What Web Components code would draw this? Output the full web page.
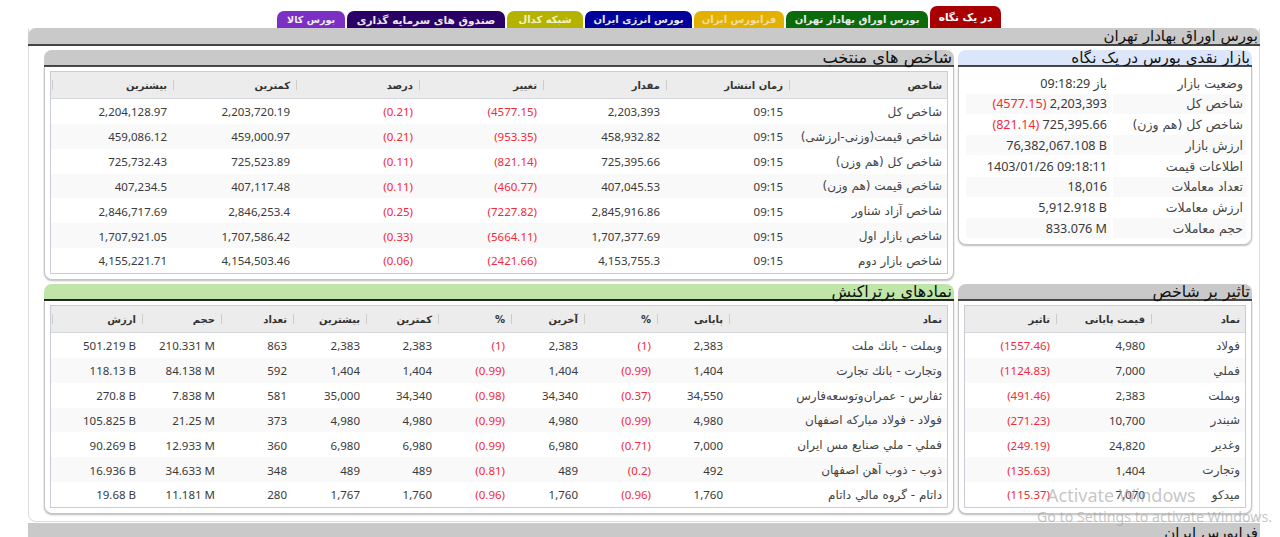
<!DOCTYPE html>
<html lang="fa" dir="rtl">
<head>
<meta charset="utf-8">
<title>بورس</title>
<style>
html,body{margin:0;padding:0;background:#fff;height:537px;overflow:hidden}
body{font-family:"Noto Sans","DejaVu Sans",sans-serif;color:#333}
</style>
</head>
<body>
<market-page>
  <tab-bar slot="tabs">
    <tab-item bg="#a80000" fg="#fff" active>در یک نگاه</tab-item>
    <tab-item bg="#0b6b0b" fg="#e8e8e8" w="142">بورس اوراق بهادار تهران</tab-item>
    <tab-item bg="#e2b100" fg="#f5dca0" w="90">فرابورس ایران</tab-item>
    <tab-item bg="#00009c" fg="#e8e8e8" w="107">بورس انرژی ایران</tab-item>
    <tab-item bg="#b3b300" fg="#f2f2c8" w="76">شبکه کدال</tab-item>
    <tab-item bg="#2b0066" fg="#e8e8e8" w="158" style="font-size:10.6px">صندوق های سرمایه گذاری</tab-item>
    <tab-item bg="#7b2fc4" fg="#eee" w="68" style="font-size:9.6px">بورس کالا</tab-item>
  </tab-bar>
  <exchange-panel heading="بورس اوراق بهادار تهران">
    <board-section heading="بازار نقدی بورس در یک نگاه" tone="blue" id="info" style="--fs:15.2px"></board-section>
    <board-section heading="شاخص های منتخب" id="sel" style="--fs:16.2px"></board-section>
    <board-section heading="تاثیر بر شاخص" id="imp" style="--fs:15.8px"></board-section>
    <board-section heading="نمادهای برتراکنش" tone="green" id="top" style="--fs:16px"></board-section>
  </exchange-panel>
  <next-bar slot="next">فرابورس ایران</next-bar>
  <win-mark slot="mark"></win-mark>
</market-page>
<script>
function def(name, css, html, extra){
  customElements.define(name, class extends HTMLElement{
    constructor(){
      super();
      const r=this.attachShadow({mode:'open'});
      r.innerHTML='<style>'+css+'</style>'+html;
    }
    connectedCallback(){ if(extra) extra(this); }
  });
}
const AR='"DejaVu Sans",sans-serif';
def('market-page',`:host{display:block;width:1280px;height:537px;position:relative;overflow:hidden;direction:rtl}`,
  `<slot name="tabs"></slot><slot></slot><slot name="next"></slot><slot name="mark"></slot>`);
def('tab-bar',`:host{display:flex;align-items:flex-end;gap:2px;height:28px;padding-right:279px;box-sizing:border-box}`,`<slot></slot>`);
def('tab-item',`:host{display:flex;align-items:center;justify-content:center;box-sizing:border-box;height:17px;border-radius:7px 7px 0 0;
  font:bold 10px ${AR};white-space:nowrap;overflow:hidden}
  :host([active]){height:22px;width:71px;font-size:10.5px}`,`<slot></slot>`,
  el=>{el.style.background=el.getAttribute('bg');el.style.color=el.getAttribute('fg');
    if(el.getAttribute('w'))el.style.width=el.getAttribute('w')+'px';});
def('exchange-panel',`:host{display:block;margin:0 20px;width:1232px;box-sizing:border-box;height:494px;
   border:1px solid #dcdcdc;border-top:0;border-radius:0 0 8px 8px}
  .h{height:16px;background:#c9c9c9;border-bottom:2px solid #444;border-radius:8px 8px 0 0;margin:0 -1px;font:15px/17px ${AR};color:#111;padding-right:2px;white-space:nowrap}
  .g{display:grid;grid-template-columns:294px 910px;grid-template-rows:230px 230px;gap:4px;padding:4px 7px 0 0}`,
  `<div class="h"></div><div class="g"><slot></slot></div>`,
  el=>{el.shadowRoot.querySelector('.h').textContent=el.getAttribute('heading');});
def('board-section',`:host{display:block;box-sizing:border-box}
  .b{background:#fff;border:1px solid #c4c4c4;border-top:0;border-radius:0 0 8px 8px;box-shadow:0 1px 2px #bbb;box-sizing:border-box}
  .h{height:15px;background:#c9c9c9;border-bottom:2px solid #444;border-radius:8px 8px 0 0;font:var(--fs,15.5px)/16px ${AR};color:#111;padding-right:2px;white-space:nowrap}
  :host([tone=blue]) .h{background:#dbe6fb}
  :host([tone=green]) .h{background:#bfe6a8;border-bottom-color:#222}
  .b{padding:4px 5px 5px}
  `,`<div class="h"></div><div class="b"><slot></slot></div>`,
  el=>{el.shadowRoot.querySelector('.h').textContent=el.getAttribute('heading');});
def('data-table',`:host{display:block;border:1px solid #c8ccd4;box-sizing:border-box;background:#fff}`,`<slot></slot>`);
def('data-row',`:host{display:grid;grid-template-columns:var(--cols);height:24.85px;align-items:stretch;box-sizing:border-box}
  :host([stripe]){background:#f9f9f9}
  :host([head]){background:#ececec;height:27px;border-bottom:1px solid #d4d6dc;font-weight:bold}`,`<slot></slot>`);
def('data-cell',`:host{display:flex;align-items:center;padding:1px 5px 0 0;box-sizing:border-box;position:relative;white-space:nowrap;
   font:11.5px "Noto Sans",${AR};color:#3a3a3a;min-width:0}
  :host([ar]){font:12px ${AR};color:#444}
  :host([h]){font:bold 10px ${AR};color:#333}
  :host([h])::after{content:"";position:absolute;left:1px;top:8px;height:10px;width:1px;background:#ccc}
  :host([neg]){color:#f22b3a}
  .n{direction:ltr;display:inline-block}`,`<span class="n"><slot></slot></span>`);
def('info-list',`:host{display:block;padding:2px 0 0 3px}`,`<slot></slot>`);
def('info-row',`:host{display:grid;grid-template-columns:133px 144px;gap:0 3px;height:20px;margin-bottom:.75px}
  :host([stripe]) ::slotted(*){background:#f9f9f9}`,`<slot></slot>`);
def('info-cell',`:host{display:flex;align-items:center;padding-right:3px;box-sizing:border-box;white-space:nowrap;font:12.6px "Noto Sans",${AR};color:#3a3a3a}
  :host([ar]){font:12.5px ${AR};color:#444}
  .n{direction:ltr;display:inline-block}`,`<span class="n"><slot></slot></span>`);
def('neg-text',`:host{display:inline;color:#f22b3a}`,`<slot></slot>`);
def('next-bar',`:host{display:block;height:15px;margin:1px 20px 0;width:1232px;background:#c9c9c9;font:15px/20px ${AR};color:#111;padding-right:2px;box-sizing:border-box;white-space:nowrap;overflow:hidden}`,`<slot></slot>`);
def('win-mark',`:host{position:absolute;left:1037px;top:484px;direction:ltr;color:rgba(160,160,160,.6);font-family:"Noto Sans",sans-serif;white-space:nowrap;pointer-events:none}
  .a{font-size:18px;line-height:22px;padding-left:10px}.b{font-size:14.2px;line-height:22px}`,
  `<div class="a">Activate Windows</div><div class="b">Go to Settings to activate Windows.</div>`);

function makeRow(cols,head,stripe){
  const r=document.createElement('data-row');
  if(head) r.setAttribute('head','');
  if(stripe) r.setAttribute('stripe','');
  r.innerHTML=cols.map((c,i)=>{
    let a=head?'h':(i===0?'ar':(c[0]==='('?'neg':''));
    return `<data-cell ${a}>${c}</data-cell>`;
  }).join('');
  return r;
}
function makeTable(host,colsCss,head,rows){
  const t=document.createElement('data-table');
  t.style.setProperty('--cols',colsCss);
  t.appendChild(makeRow(head,true));
  rows.forEach((c,i)=>t.appendChild(makeRow(c,false,i%2===1)));
  host.appendChild(t);
}
makeTable(document.getElementById('sel'),'159px 123px 123px 124px 123px 123px 121px',
 ['شاخص','زمان انتشار','مقدار','تغییر','درصد','کمترین','بیشترین'],[
 ['شاخص کل','09:15','2,203,393','(4577.15)','(0.21)','2,203,720.19','2,204,128.97'],
 ['شاخص قیمت(وزنی-ارزشی)','09:15','458,932.82','(953.35)','(0.21)','459,000.97','459,086.12'],
 ['شاخص کل (هم وزن)','09:15','725,395.66','(821.14)','(0.11)','725,523.89','725,732.43'],
 ['شاخص قیمت (هم وزن)','09:15','407,045.53','(460.77)','(0.11)','407,117.48','407,234.5'],
 ['شاخص آزاد شناور','09:15','2,845,916.86','(7227.82)','(0.25)','2,846,253.4','2,846,717.69'],
 ['شاخص بازار اول','09:15','1,707,377.69','(5664.11)','(0.33)','1,707,586.42','1,707,921.05'],
 ['شاخص بازار دوم','09:15','4,153,755.3','(2421.66)','(0.06)','4,154,503.46','4,155,221.71']]);
makeTable(document.getElementById('top'),'219px 72px 73px 73px 73px 72px 73px 72px 79px 90px',
 ['نماد','پایانی','%','آخرین','%','کمترین','بیشترین','تعداد','حجم','ارزش'],[
 ['وبملت - بانك ملت','2,383','(1)','2,383','(1)','2,383','2,383','863','210.331 M','501.219 B'],
 ['وتجارت - بانك تجارت','1,404','(0.99)','1,404','(0.99)','1,404','1,404','592','84.138 M','118.13 B'],
 ['ثفارس - عمران‌وتوسعه‌فارس','34,550','(0.37)','34,340','(0.98)','34,340','35,000','581','7.838 M','270.8 B'],
 ['فولاد - فولاد مباركه اصفهان','4,980','(0.99)','4,980','(0.99)','4,980','4,980','373','21.25 M','105.825 B'],
 ['فملي - ملي صنايع مس ايران','7,000','(0.71)','6,980','(0.99)','6,980','6,980','360','12.933 M','90.269 B'],
 ['ذوب - ذوب آهن اصفهان','492','(0.2)','489','(0.81)','489','489','348','34.633 M','16.936 B'],
 ['داتام - گروه مالي داتام','1,760','(0.96)','1,760','(0.96)','1,760','1,767','280','11.181 M','19.68 B']]);
makeTable(document.getElementById('imp'),'95px 95px 92px',
 ['نماد','قیمت پایانی','تاثیر'],[
 ['فولاد','4,980','(1557.46)'],['فملي','7,000','(1124.83)'],['وبملت','2,383','(491.46)'],
 ['شبندر','10,700','(271.23)'],['وغدير','24,820','(249.19)'],['وتجارت','1,404','(135.63)'],['ميدكو','7,070','(115.37)']]);
const info=[
 ['وضعیت بازار','<span dir="rtl">باز 09:18:29</span>'],
 ['شاخص کل','<neg-text>(4577.15)</neg-text> 2,203,393'],
 ['شاخص کل (هم وزن)','<neg-text>(821.14)</neg-text> 725,395.66'],
 ['ارزش بازار','76,382,067.108 B'],
 ['اطلاعات قیمت','1403/01/26 09:18:11'],
 ['تعداد معاملات','18,016'],
 ['ارزش معاملات','5,912.918 B'],
 ['حجم معاملات','833.076 M']];
const list=document.createElement('info-list');
list.innerHTML=info.map((r,i)=>`<info-row ${i%2?'stripe':''}><info-cell ar>${r[0]}</info-cell><info-cell>${r[1]}</info-cell></info-row>`).join('');
document.getElementById('info').appendChild(list);
</script>
</body>
</html>
